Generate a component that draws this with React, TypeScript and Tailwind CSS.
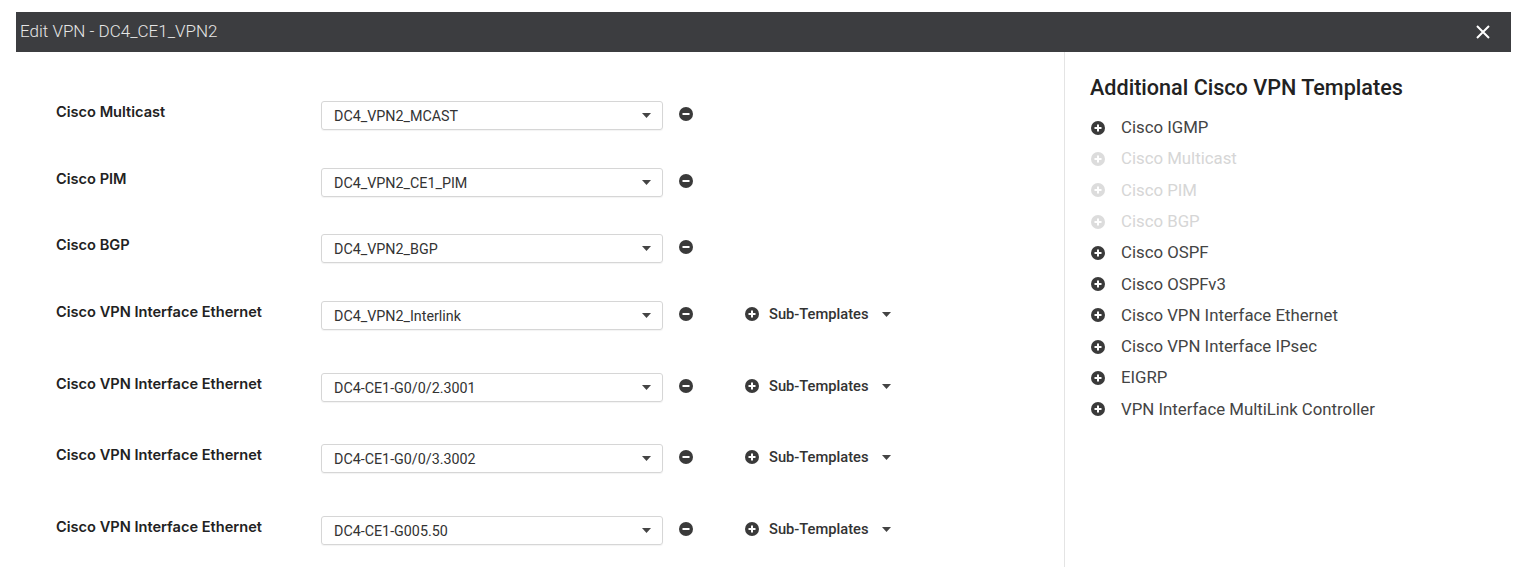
import React from 'react';

type Row = { label: string; value: string; sub?: boolean; h: string };

const rows: Row[] = [
  { label: 'Cisco Multicast', value: 'DC4_VPN2_MCAST', h: 'h-[67px]' },
  { label: 'Cisco PIM', value: 'DC4_VPN2_CE1_PIM', h: 'h-[66px]' },
  { label: 'Cisco BGP', value: 'DC4_VPN2_BGP', h: 'h-[67px]' },
  { label: 'Cisco VPN Interface Ethernet', value: 'DC4_VPN2_Interlink', sub: true, h: 'h-[72px]' },
  { label: 'Cisco VPN Interface Ethernet', value: 'DC4-CE1-G0/0/2.3001', sub: true, h: 'h-[71px]' },
  { label: 'Cisco VPN Interface Ethernet', value: 'DC4-CE1-G0/0/3.3002', sub: true, h: 'h-[72px]' },
  { label: 'Cisco VPN Interface Ethernet', value: 'DC4-CE1-G005.50', sub: true, h: 'h-[72px]' },
];

const templates = [
  { name: 'Cisco IGMP', on: true },
  { name: 'Cisco Multicast', on: false },
  { name: 'Cisco PIM', on: false },
  { name: 'Cisco BGP', on: false },
  { name: 'Cisco OSPF', on: true },
  { name: 'Cisco OSPFv3', on: true },
  { name: 'Cisco VPN Interface Ethernet', on: true },
  { name: 'Cisco VPN Interface IPsec', on: true },
  { name: 'EIGRP', on: true },
  { name: 'VPN Interface MultiLink Controller', on: true },
];

function CircleIcon({ plus, color = '#3a3a3a' }: { plus?: boolean; color?: string }) {
  return (
    <svg width="14" height="14" viewBox="0 0 14 14">
      <circle cx="7" cy="7" r="7" fill={color} />
      <rect x="3.5" y="6" width="7" height="2" fill="#fff" />
      {plus && <rect x="6" y="3.5" width="2" height="7" fill="#fff" />}
    </svg>
  );
}

function Caret() {
  return (
    <svg width="9" height="5" viewBox="0 0 9 5">
      <path d="M0 0h9L4.5 5z" fill="#444" />
    </svg>
  );
}

export default function App() {
  return (
    <div className="w-[1529px] h-[567px] bg-white overflow-hidden" style={{ fontFamily: 'Roboto, "Noto Sans", sans-serif' }}>
      <div className="pt-3 pl-4 pr-[18px]">
        <div className="h-10 bg-[#3c3d40] flex items-center justify-between pl-1 pr-[21px]">
          <span className="text-[17px] text-[#e6e6e6] font-light">Edit VPN - DC4_CE1_VPN2</span>
          <svg width="14" height="14" viewBox="0 0 14 14">
            <path d="M1 1L13 13M13 1L1 13" stroke="#fff" strokeWidth="2" />
          </svg>
        </div>
        <div className="flex">
          <div className="w-[1048px] pl-10 pt-[49px]">
            {rows.map((r, i) => (
              <div key={i} className={`flex items-start ${r.h}`}>
                <div className="w-[265px] pt-[1px] text-[14.6px] font-semibold text-[#222]" style={{ fontFamily: 'Inter, sans-serif' }}>
                  {r.label}
                </div>
                <div className="w-[342px] h-[29px] border border-[#d6d6d6] rounded-[3px] flex items-center justify-between pl-3 pr-[11px] shadow-[0_1px_1px_rgba(0,0,0,0.05)]">
                  <span className="text-[14.3px] text-[#333] pt-[2px]">{r.value}</span>
                  <Caret />
                </div>
                <div className="ml-4 h-[29px] flex items-center pb-[3px]">
                  <CircleIcon />
                </div>
                {r.sub && (
                  <div className="ml-[52px] h-[29px] flex items-center pb-[3px]">
                    <CircleIcon plus />
                    <span className="ml-[10px] text-[14.7px] font-medium text-[#333]">Sub-Templates</span>
                    <span className="ml-[14px] flex"><Caret /></span>
                  </div>
                )}
              </div>
            ))}
          </div>
          <div className="flex-1 border-l border-[#e4e4e4] h-[515px] pl-[25px] pt-[24px]">
            <div className="text-[21.6px] font-medium text-[#222] leading-6">Additional Cisco VPN Templates</div>
            <div className="mt-[12px] pl-[1px]">
              {templates.map((t) => (
                <div key={t.name} className="h-[31.3px] flex items-center">
                  <CircleIcon plus color={t.on ? '#3a3a3a' : '#dcdcdc'} />
                  <span className={`ml-[16px] text-[16.8px] ${t.on ? 'text-[#444]' : 'text-[#d6d6d6]'}`}>{t.name}</span>
                </div>
              ))}
            </div>
          </div>
        </div>
      </div>
    </div>
  );
}
